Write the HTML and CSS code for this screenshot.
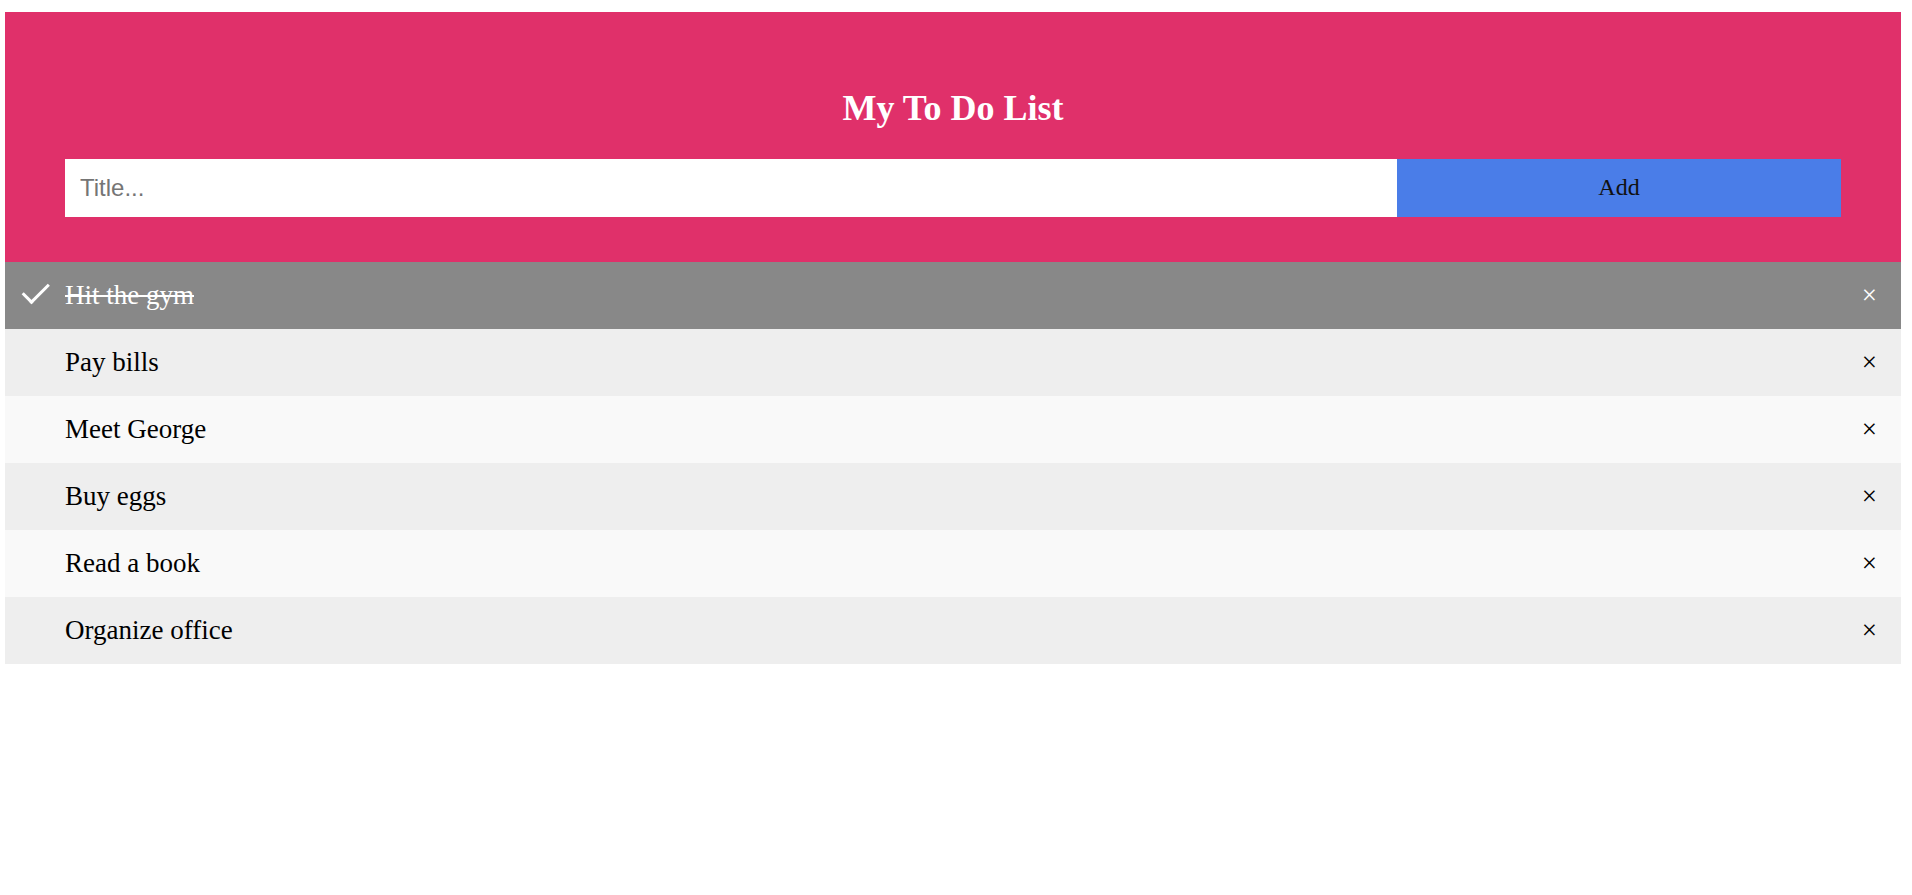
FILE: index.html
```html
<!DOCTYPE html>
<html>
<head>
<meta charset="utf-8">
<link rel="stylesheet" href="styles.css">
</head>
<body>
<div class="app">
  <div class="header">
    <h2 class="title">My To Do List</h2>
    <div class="form">
      <input class="title-input" type="text" placeholder="Title...">
      <span class="add-btn">Add</span>
    </div>
  </div>
  <ul class="list">
    <li class="item checked">Hit the gym<span class="close">×</span></li>
    <li class="item">Pay bills<span class="close">×</span></li>
    <li class="item">Meet George<span class="close">×</span></li>
    <li class="item">Buy eggs<span class="close">×</span></li>
    <li class="item">Read a book<span class="close">×</span></li>
    <li class="item">Organize office<span class="close">×</span></li>
  </ul>
</div>
</body>
</html>
```
FILE: styles.css
```css
html, body {
  background: #fff;
}
body {
  margin: 12px 11px 0 5px;
  font-family: "Liberation Serif", "Times New Roman", serif;
}
.header {
  background-color: #e0306a;
  padding: 45px 60px;
  color: #fff;
  text-align: center;
}
.title {
  font-size: 36px;
  font-weight: bold;
  margin: 30px 0 30px 0;
  line-height: normal;
}
.form {
  display: flex;
}
.title-input {
  box-sizing: content-box;
  margin: 0;
  border: none;
  border-radius: 0;
  width: calc(75% - 30px);
  padding: 15px;
  font-size: 24px;
  font-family: "Liberation Sans", Arial, sans-serif;
  color: #000;
  outline: none;
}
.title-input::placeholder {
  color: #757575;
}
.add-btn {
  box-sizing: border-box;
  width: 25%;
  padding: 15px;
  background: #4a7de8;
  color: #111;
  font-size: 24px;
  line-height: normal;
  text-align: center;
}
.list {
  margin: 0;
  padding: 0;
}
.item {
  position: relative;
  list-style-type: none;
  padding: 18px 12px 18px 60px;
  background: #eeeeee;
  font-size: 27px;
  line-height: normal;
  color: #000;
}
.item:nth-child(odd) {
  background: #f9f9f9;
}
.item.checked {
  background: #888888;
  color: #fff;
  text-decoration: line-through;
}
.item.checked::before {
  content: '';
  position: absolute;
  border-color: #fff;
  border-style: solid;
  border-width: 0 3px 3px 0;
  top: 15px;
  left: 24px;
  transform: rotate(45deg);
  height: 22.5px;
  width: 10.5px;
}
.close {
  position: absolute;
  right: 0;
  top: 0;
  padding: 18px 24px;
  text-decoration: none;
}
```
